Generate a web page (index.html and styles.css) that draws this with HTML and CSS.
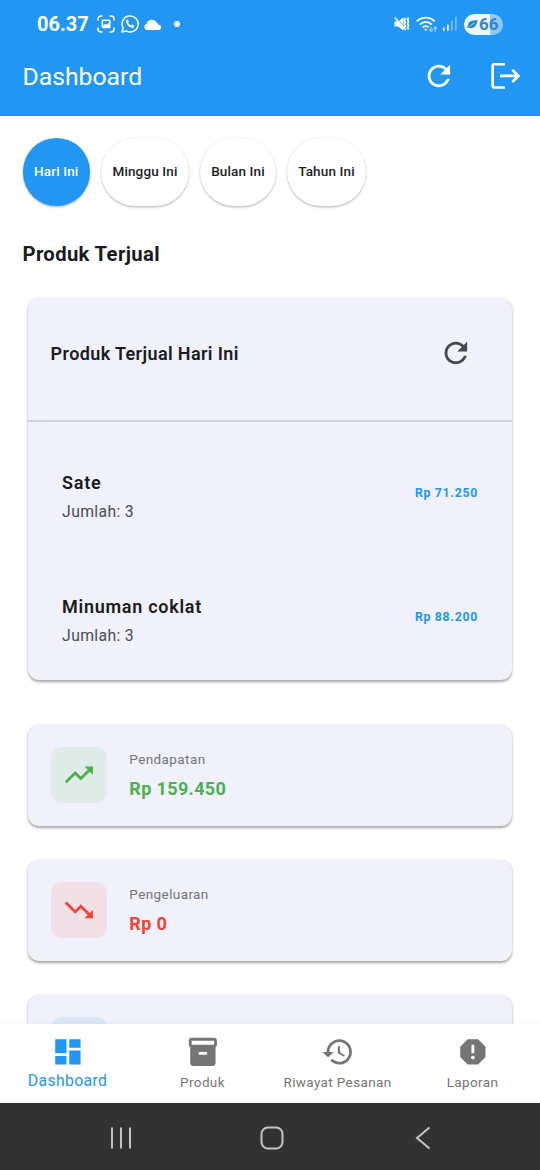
FILE: index.html
```html
<!DOCTYPE html>
<html lang="id">
<head>
<meta charset="utf-8">
<meta name="viewport" content="width=device-width, initial-scale=1">
<title>Dashboard</title>
<link rel="stylesheet" href="styles.css">
</head>
<body>
<svg class="sprite" width="0" height="0">
  <symbol id="refresh" viewBox="0 0 24 24"><path d="M17.65 6.35C16.2 4.9 14.21 4 12 4c-4.42 0-7.99 3.58-7.99 8s3.57 8 7.99 8c3.73 0 6.84-2.55 7.73-6h-2.08c-.82 2.33-3.04 4-5.65 4-3.31 0-6-2.69-6-6s2.69-6 6-6c1.66 0 3.14.69 4.22 1.78L13 11h7V4l-2.35 2.35z"/></symbol>
</svg>
<div class="phone">
  <header class="top">
    <div class="status">
      <span class="time">06.37</span>
      <svg class="s-shot" viewBox="0 0 18 18" fill="none" stroke="#fff" stroke-width="1.5" stroke-linecap="round"><path d="M1 5V4a3 3 0 0 1 3-3h1M13 1h1a3 3 0 0 1 3 3v1M17 13v1a3 3 0 0 1-3 3h-1M5 17H4a3 3 0 0 1-3-3v-1"/><rect x="5.3" y="5.3" width="7.6" height="7.2" rx="1"/><path d="M5.5 12V10.500l2.500-1.800 1.500 1L11.500 8l1.300 1.500V12z" fill="#fff" stroke="none"/></svg>
      <svg class="s-wa" viewBox="0 0 18 18" fill="none" stroke="#fff" stroke-width="1.5"><path d="M.9 17.1l1.2-4.3A8 8 0 1 1 5.3 16z" stroke-linejoin="round"/><path d="M5.2 6.2c0-1 .6-1.6 1.1-1.7.5 0 .7.1.9.5l.6 1.5c.1.4-.5 1-.7 1.3.7 1.4 1.7 2.2 3 2.8.5-.4.8-1.1 1.2-1l1.7.9c.4.2.2 1-.1 1.5-.6.8-1.8 1-2.7.7-2.7-.8-5-3.900-5-6.500z" fill="#fff" stroke="none"/></svg>
      <svg class="s-cloud" viewBox="0 0 18 11"><path d="M3 11a3 3 0 0 1-.4-5.900A5.500 5.500 0 0 1 12.700 3.500a4 4 0 0 1 1.800 2.200A2.700 2.700 0 0 1 15.200 11z" fill="#fff"/></svg>
      <i class="s-dot"></i>
      <span class="fill"></span>
      <svg class="s-mute" viewBox="0 0 16 16" fill="none" stroke="#fff"><path d="M.5 5.500h3.500L9.500 1.500v13l-5.500-4H.5z" fill="#fff" stroke="none"/><path d="M2 1l12 13.500" stroke="#2196f3" stroke-width="1"/><path d="M.8 1.500l11 12.500" stroke-width="1.600"/><path d="M11.300 2l-.8 2 .8 2-.8 2 .8 2-.8 2M14.500 1.500l-.9 2 .9 2-.9 2 .9 2-.9 2 .9 2" stroke-width="1.700"/></svg>
      <svg class="s-wifi" viewBox="0 0 22 17" fill="none" stroke="#fff" stroke-width="1.900"><path d="M.8 5.400a12.500 12.500 0 0 1 17.900 0M3.800 8.600a8.200 8.200 0 0 1 11.900 0M6.700 11.400a4.200 4.200 0 0 1 6.100 0"/><circle cx="9.700" cy="13.600" r="1.200" fill="#fff" stroke="none"/><g opacity=".5" stroke-width="1.300"><path d="M15 10.500v5M13 13.500l2 2 2-2M19.300 16v-5M17.500 12.800l1.800-2 1.800 2"/></g></svg>
      <svg class="s-signal" viewBox="0 0 14 16" fill="#fff"><rect x="0" y="11.500" width="1.700" height="3.500" rx=".8"/><rect x="4" y="8.500" width="1.700" height="6.500" rx=".8"/><g opacity=".4"><rect x="8" y="4.500" width="1.700" height="10.500" rx=".8"/><rect x="12" y=".5" width="1.700" height="14.500" rx=".8"/></g></svg>
      <span class="battery"><svg class="leaf" viewBox="0 0 11 9"><path d="M10.500.3C5 .3 1.200 1.300 1.200 5L.2 7l1.300.7C6 9 9.700 7 10.500.3z" fill="#2383d2"/><path d="M3 6.500C4.500 4.500 6 3.800 7.500 3.200" stroke="#e9f5fe" stroke-width=".8" fill="none"/></svg>66</span>
    </div>
    <div class="appbar">
      <h1>Dashboard</h1>
      <svg class="icon"><use href="#refresh"/></svg>
      <svg class="icon logout" viewBox="0 0 34 34" fill="none" stroke="#fff" stroke-width="2.700"><path d="M17 5.300H6.500a1.800 1.800 0 0 0-1.800 1.800v19.800a1.800 1.800 0 0 0 1.800 1.800H17M12 17h17.500M24.500 10.900l6.100 6.100-6.100 6.100"/></svg>
    </div>
  </header>

  <main>
    <div class="chips">
      <button class="chip on">Hari Ini</button><button class="chip c2">Minggu Ini</button><button class="chip c3">Bulan Ini</button><button class="chip c4">Tahun Ini</button>
    </div>
    <h2>Produk Terjual</h2>
    <section class="card sold">
      <div class="sold-head"><h3>Produk Terjual Hari Ini</h3><svg class="icon"><use href="#refresh"/></svg></div>
      <div class="row"><div><b class="name">Sate</b><span class="qty">Jumlah: 3</span></div><span class="price">Rp 71.250</span></div>
      <div class="row"><div><b class="name">Minuman coklat</b><span class="qty">Jumlah: 3</span></div><span class="price">Rp 88.200</span></div>
    </section>
    <section class="card stat green">
      <div class="tile"><svg class="icon" viewBox="0 0 24 24"><path d="M16 6l2.290 2.290-4.880 4.880-4-4L2 16.590 3.410 18l6-6 4 4 6.300-6.290L22 12V6z"/></svg></div>
      <div><span class="label">Pendapatan</span><b class="amount">Rp 159.450</b></div>
    </section>
    <section class="card stat red">
      <div class="tile"><svg class="icon" viewBox="0 0 24 24"><path d="M16 18l2.290-2.290-4.880-4.880-4 4L2 7.410 3.410 6l6 6 4-4 6.300 6.290L22 12v6z"/></svg></div>
      <div><span class="label">Pengeluaran</span><b class="amount">Rp 0</b></div>
    </section>
    <section class="card stat blue"><div class="tile"></div></section>
  </main>

  <nav class="tabs">
    <a class="tab on"><svg class="icon" viewBox="0 0 24 24"><path d="M3 13h8V3H3v10zm0 8h8v-6H3v6zm10 0h8V11h-8v10zm0-18v6h8V3h-8z"/></svg><span>Dashboard</span></a>
    <a class="tab"><svg class="icon" viewBox="0 0 24 24"><path d="M20 2H4c-1 0-2 .9-2 2v3.010c0 .72.43 1.340 1 1.690V20c0 1.100 1.100 2 2 2h14c.9 0 2-.9 2-2V8.700c.57-.35 1-.97 1-1.690V4c0-1.100-1-2-2-2zm-5 12H9v-2h6v2zm5-7H4V4h16v3z"/></svg><span>Produk</span></a>
    <a class="tab"><svg class="icon" viewBox="0 0 24 24"><path d="M13 3c-4.970 0-9 4.030-9 9H1l3.890 3.890.07.14L9 12H6c0-3.870 3.130-7 7-7s7 3.130 7 7-3.130 7-7 7c-1.930 0-3.680-.79-4.940-2.060l-1.420 1.420C8.270 19.990 10.510 21 13 21c4.970 0 9-4.030 9-9s-4.030-9-9-9zm-1 5v5l4.280 2.540.72-1.210-3.500-2.080V8H12z"/></svg><span>Riwayat Pesanan</span></a>
    <a class="tab"><svg class="icon" viewBox="0 0 24 24"><path d="M15.730 3H8.270L3 8.270v7.460L8.270 21h7.460L21 15.730V8.270L15.730 3zM12 17.300c-.72 0-1.300-.58-1.300-1.300 0-.72.58-1.300 1.300-1.300.72 0 1.300.58 1.300 1.300 0 .72-.58 1.300-1.300 1.300zm1-4.300h-2V7h2v6z"/></svg><span>Laporan</span></a>
  </nav>

  <div class="sysnav">
    <svg viewBox="0 0 24 24"><path d="M3 1.500v21M12 1.500v21M21 1.500v21"/></svg>
    <svg viewBox="0 0 24 24"><rect x="1.500" y="1.500" width="21" height="21" rx="6.500"/></svg>
    <svg viewBox="0 0 24 24"><path d="M18.500 1.500L6 12l12.500 10.500"/></svg>
  </div>
</div>
</body>
</html>
```

FILE: styles.css
```css
* { box-sizing: border-box; margin: 0; }
body { font-family: Roboto, sans-serif; background: #fff; color: #1a1b20; }
.sprite { display: block; }
.phone { width: 540px; height: 1170px; display: flex; flex-direction: column; overflow: hidden; }
.icon { width: 33.75px; height: 33.75px; fill: currentColor; flex: none; display: block; }

.top { height: 115.5px; background: #2196f3; color: #fff; flex: none; }
.status { height: 37px; padding: 11px 37px 0; display: flex; align-items: center; }
.time { font-size: 20px; font-weight: 700; width: 60px; line-height: 24px; }
.s-shot { width: 18px; height: 18px; }
.s-wa { width: 18px; height: 18px; margin-left: 5.5px; }
.s-cloud { width: 18px; height: 11px; margin-left: 5.5px; }
.s-dot { width: 6.5px; height: 6.5px; border-radius: 50%; background: #fff; margin-left: 11.5px; }
.fill { flex: 1; }
.s-mute { width: 16px; height: 16px; margin-right: 6px; }
.s-wifi { width: 22px; height: 17px; margin-right: 5px; }
.s-signal { width: 14px; height: 16px; margin-right: 7px; }
.battery { width: 39px; height: 21px; border-radius: 11px; display: flex; align-items: center; padding-left: 3px; gap: 1px; color: #2f86cb; font-size: 17px; font-weight: 700; background: linear-gradient(90deg, #ebf6fe 66%, #8fc9f8 66%); }
.leaf { width: 11px; height: 9px; }
.appbar { height: 78.5px; padding: 0 17px 0 22.5px; display: flex; align-items: center; }
.appbar h1 { flex: 1; font-size: 24.75px; font-weight: 400; }
.logout { margin: 0 1px 0 32.25px; fill: none; }

main { flex: 1; min-height: 0; overflow: hidden; padding: 22.5px 22.5px 0; }
.chips { display: flex; gap: 11px; }
.chip { width: 67.5px; height: 67.5px; padding: 0 0 1px; border: 0; border-radius: 34px; background: #fff; color: #1d1d1f; font: 500 13.5px Roboto, sans-serif; letter-spacing: .14px; box-shadow: 0 1.5px 2px rgba(0,0,0,.22), 0 0 2px rgba(0,0,0,.1); white-space: nowrap; }
.chip.on { background: #2196f3; color: #fff; }
.c2 { width: 88px; }
.c3 { width: 76px; }
.c4 { width: 79px; }
h2 { font-size: 20.25px; font-weight: 700; letter-spacing: .35px; line-height: 24px; margin: 36px 0 32px; }
.card { background: #f0f1fa; border-radius: 11.25px; margin: 0 5.6px; box-shadow: 0 1.5px 3px rgba(0,0,0,.25), 0 1.5px 2px rgba(0,0,0,.12); }
.sold { height: 382.5px; }
.sold-head { height: 124px; display: flex; align-items: center; justify-content: space-between; padding: 0 39.5px 11px 22.5px; border-bottom: 2px solid #d0d1dc; color: #45464f; }
.sold-head h3 { font-size: 18px; font-weight: 600; letter-spacing: .38px; color: #1a1b20; }
.row { display: flex; justify-content: space-between; align-items: center; padding: 20px 34px 0; height: 123.75px; }
.name { display: block; font-size: 18px; font-weight: 600; letter-spacing: .72px; line-height: 25px; margin-top: 7px; }
.qty { display: block; font-size: 15.75px; letter-spacing: .35px; line-height: 22px; margin-top: 6px; color: #4b4c54; }
.price { color: #2196f3; font-size: 12.3px; font-weight: 700; letter-spacing: .7px; }
.stat { height: 101.25px; display: flex; align-items: center; gap: 22.5px; padding: 0 22.5px; margin-top: 33.75px; }
.sold + .stat { margin-top: 45px; }
.tile { width: 56.25px; height: 56.25px; margin-top: -1px; border-radius: 11.25px; display: flex; align-items: center; justify-content: center; }
.green .tile { background: #e0ece8; color: #4caf50; }
.red .tile { background: #f1e0e6; color: #f44336; }
.blue .tile { background: #dce8f9; }
.green .amount { color: #4caf50; }
.red .amount { color: #f44336; }
.label { display: block; font-size: 13.5px; letter-spacing: .4px; color: #757575; line-height: 20px; margin-top: -1px; }
.amount { display: block; font-size: 18px; font-weight: 700; letter-spacing: .35px; line-height: 26px; margin-top: 7px; }

.tabs { height: 79px; flex: none; display: flex; background: #fff; color: #757575; box-shadow: 0 -1px 4px rgba(0,0,0,.04); }
.tab { flex: 1; display: flex; flex-direction: column; align-items: center; padding-top: 11px; font-size: 13.5px; letter-spacing: .37px; }
.tab span { line-height: 18px; margin-top: 4.5px; white-space: nowrap; }
.tab.on { color: #2196f3; font-size: 15.75px; letter-spacing: .35px; }
.tab.on span { margin-top: 3.5px; }
.sysnav { height: 67.5px; flex: none; background: #323232; display: flex; justify-content: space-between; align-items: center; padding: 3px 105.5px 0 109px; }
.sysnav svg { width: 24px; height: 24px; fill: none; stroke: #c4c4c4; stroke-width: 2; }
```
